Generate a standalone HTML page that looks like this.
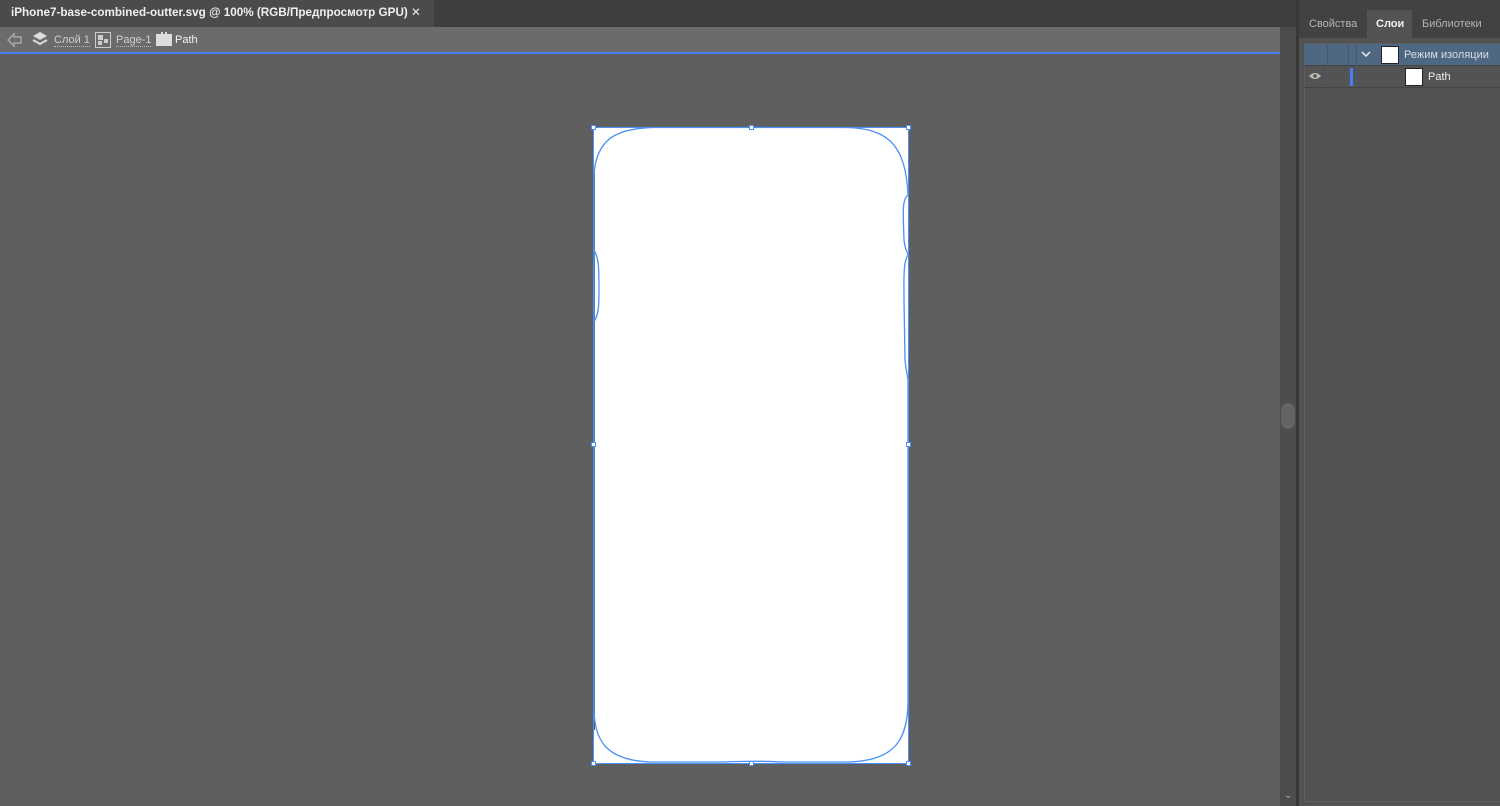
<!DOCTYPE html>
<html><head><meta charset="utf-8"><style>
*{margin:0;padding:0;box-sizing:border-box}
body{width:1500px;height:806px;overflow:hidden;background:#5f5f5f;font-family:"Liberation Sans","DejaVu Sans",sans-serif;position:relative}
.a{position:absolute;white-space:nowrap}
</style></head><body>
<div class="a" style="left:0;top:0;width:1296px;height:27px;background:#3e3e3e"></div>
<div class="a" style="left:0;top:0;width:434px;height:27px;background:#4b4b4b;color:#f0f0f0;font-size:11.7px;font-weight:bold;line-height:25px;padding-left:11px">iPhone7-base-combined-outter.svg @ 100% (RGB/Предпросмотр GPU) <span>✕</span></div>
<div class="a" style="left:0;top:27px;width:1280px;height:25px;background:#6b6b6b"></div>
<div class="a" style="left:0;top:52px;width:1280px;height:2px;background:#4d7cf0"></div>
<svg class="a" style="left:6px;top:32px" width="18" height="16" viewBox="0 0 18 16"><path d="M2 8 L8 2 V5 H15 V11 H8 V14 Z" fill="none" stroke="#aaa" stroke-width="1.4"/></svg>
<svg class="a" style="left:32px;top:31px" width="16" height="16" viewBox="0 0 16 16"><path d="M8 1 L15 5 L8 9 L1 5Z" fill="#ddd"/><path d="M1 9 L8 13 L15 9" fill="none" stroke="#ddd" stroke-width="2"/></svg>
<div class="a" style="left:54px;top:34px;color:#d0d0d0;font-size:11px;border-bottom:1px dotted #bbb;line-height:12px">Слой 1</div>
<svg class="a" style="left:95px;top:32px" width="16" height="16" viewBox="0 0 16 16"><rect x="0.5" y="0.5" width="15" height="15" fill="none" stroke="#ccc"/><rect x="3" y="3" width="5" height="5" fill="#ccc"/><rect x="9" y="7" width="4" height="4" fill="#ccc"/><rect x="3" y="9" width="4" height="4" fill="#ccc"/></svg>
<div class="a" style="left:116px;top:34px;color:#d0d0d0;font-size:11px;border-bottom:1px dotted #bbb;line-height:12px">Page-1</div>
<svg class="a" style="left:156px;top:32px" width="16" height="14" viewBox="0 0 16 14"><path d="M0 2 H5 V0 H7 V2 H9 V0 H11 V2 H16 V14 H0Z" fill="#ddd"/></svg>
<div class="a" style="left:175px;top:34px;color:#f4f4f4;font-size:11px;line-height:12px">Path</div>
<div class="a" style="left:593px;top:127px;width:316px;height:637px;background:#fff"></div>
<div class="a" style="left:593px;top:170px;width:2px;height:560px;background:#2a2a2a;opacity:.8"></div>
<svg class="a" style="left:590px;top:124px" width="322" height="643" viewBox="590 124 322 643">
<path d="M594 175 C596 140 615 128 655 127.5 H845 C888 128 906 145 908 195 C902 200 903 210 904 240 C905 250 908 253 908 255 C903 262 904 280 904 300 L905 360 C906 370 908 378 908 380 L908 700 C908 740 895 760 850 762 H780 C770 761 740 761 725 762 H650 C605 760 595 740 594 710 Z M594 250 C599 258 599 270 599 290 C599 310 598 315 594 322" fill="none" stroke="#4a90f5" stroke-width="1.3"/>
<rect x="593.5" y="127.5" width="315" height="636" fill="none" stroke="#4a90f5" stroke-width="1"/>
<g fill="#fff" stroke="#4a90f5" stroke-width="1">
<rect x="591.5" y="125.5" width="4" height="4"/><rect x="749.5" y="125.5" width="4" height="4"/><rect x="906.5" y="125.5" width="4" height="4"/>
<rect x="591.5" y="442.5" width="4" height="4"/><rect x="906.5" y="442.5" width="4" height="4"/>
<rect x="591.5" y="761.5" width="4" height="4"/><rect x="749.5" y="761.5" width="4" height="4"/><rect x="906.5" y="761.5" width="4" height="4"/>
</g></svg>
<div class="a" style="left:1280px;top:27px;width:16px;height:779px;background:#4c4c4c"></div>
<div class="a" style="left:1281px;top:403px;width:14px;height:26px;background:#646464;border-radius:7px"></div>
<div class="a" style="left:1284px;top:790px;color:#aaa;font-size:10px">⌄</div>
<div class="a" style="left:1296px;top:0;width:3px;height:806px;background:#383838"></div>
<div class="a" style="left:1299px;top:0;width:201px;height:806px;background:#535353"></div>
<div class="a" style="left:1299px;top:0;width:201px;height:38px;background:#424242"></div>
<div class="a" style="left:1367px;top:10px;width:45px;height:28px;background:#535353"></div>
<div class="a" style="left:1309px;top:18px;color:#b5b5b5;font-size:11px">Свойства</div>
<div class="a" style="left:1376px;top:18px;color:#f2f2f2;font-size:11px;font-weight:bold">Слои</div>
<div class="a" style="left:1422px;top:18px;color:#b5b5b5;font-size:11px">Библиотеки</div>
<div class="a" style="left:1304px;top:43px;width:196px;height:759px;border:1px solid #5f5f5f;border-right:none"></div>
<div class="a" style="left:1304px;top:44px;width:196px;height:21px;background:#4e6884"></div>
<div class="a" style="left:1304px;top:65px;width:196px;height:1px;background:#444"></div>
<div class="a" style="left:1304px;top:87px;width:196px;height:1px;background:#444"></div>
<div class="a" style="left:1327px;top:44px;width:1px;height:43px;background:#475a70"></div>
<div class="a" style="left:1348px;top:44px;width:1px;height:43px;background:#475a70"></div>
<div class="a" style="left:1356px;top:44px;width:1px;height:43px;background:#475a70"></div>
<div class="a" style="left:1350px;top:68px;width:3px;height:18px;background:#4d7cf0"></div>
<svg class="a" style="left:1361px;top:50px" width="10" height="8"><path d="M1 2 L5 6 L9 2" fill="none" stroke="#eee" stroke-width="1.5"/></svg>
<div class="a" style="left:1381px;top:46px;width:18px;height:18px;background:#fff;border:1px solid #222"></div>
<div class="a" style="left:1404px;top:49px;color:#d8dde4;font-size:11px">Режим изоляции</div>
<svg class="a" style="left:1309px;top:72px" width="12" height="8" viewBox="0 0 12 8"><path d="M0 4 Q6 -2 12 4 Q6 10 0 4Z" fill="#bbb"/><circle cx="6" cy="4" r="1.8" fill="#535353"/></svg>
<div class="a" style="left:1405px;top:68px;width:18px;height:18px;background:#fff;border:1px solid #222"></div>
<div class="a" style="left:1428px;top:71px;color:#eee;font-size:11px">Path</div>
</body></html>
